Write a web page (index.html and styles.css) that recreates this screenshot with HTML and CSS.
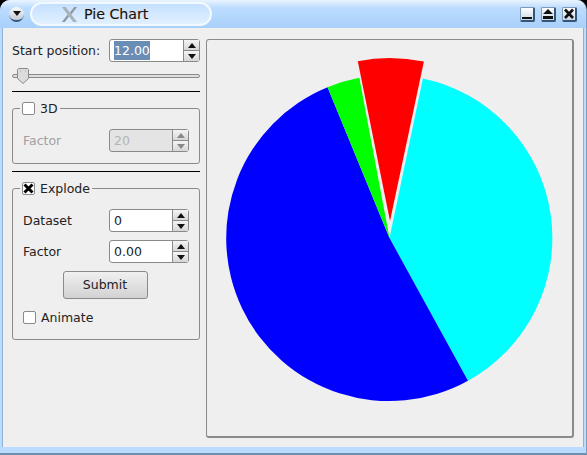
FILE: index.html
```html
<!DOCTYPE html>
<html lang="en">
<head>
    <meta charset="UTF-8">
    <title>Pie Chart</title>
    <link rel="stylesheet" href="styles.css">
</head>
<body>
    <div class="window">
        <div class="titlebar">
            <div class="menu-btn"><span class="menu-arrow"></span></div>
            <div class="title-pill">
                <svg class="x-logo" width="17" height="17" viewBox="0 0 18 18">
                    <path d="M1 1h4l12 16h-4z" fill="#a9b2ba"/>
                    <path d="M14 1h3l-6 8-1.500-2zM1 17l6-8 1.500 2-4.500 6z" fill="#8f99a3"/>
                </svg>
                <span class="title-text">Pie Chart</span>
            </div>
            <div class="win-btns">
                <div class="win-btn">
                    <svg width="12" height="12" viewBox="0 0 12 12"><path d="M1 9h10v2H1z" fill="#111"/></svg>
                </div>
                <div class="win-btn">
                    <svg width="12" height="12" viewBox="0 0 12 12"><path d="M6 1l5 5H1zM1 8h10v3H1z" fill="#111"/></svg>
                </div>
                <div class="win-btn">
                    <svg width="12" height="12" viewBox="0 0 12 12"><path d="M2 1.500l8 8.500M10 1.500l-8 8.500" stroke="#111" stroke-width="2.600" fill="none"/></svg>
                </div>
            </div>
        </div>

        <div class="content">
            <div class="controls">
                <div class="row start-row">
                    <span class="row-label">Start position:</span>
                    <div class="spin spin-wide">
                        <div class="spin-value"><span class="selected">12.00</span></div>
                        <div class="spin-btns">
                            <div class="spin-btn"><span class="arrow-up"></span></div>
                            <div class="spin-btn"><span class="arrow-down"></span></div>
                        </div>
                    </div>
                </div>

                <div class="slider">
                    <div class="slider-track"></div>
                    <svg class="slider-handle" width="12" height="16" viewBox="0 0 12 16">
                        <path d="M1.500.500h9l1 1v9l-5.500 5-5.500-5v-9z" fill="#dcdcdc" stroke="#8a8a8a"/>
                        <path d="M3 3h1M8 3h1" stroke="#aaa"/>
                    </svg>
                </div>

                <div class="divider first-divider"></div>

                <fieldset class="group group-3d">
                    <legend><span class="check"></span>3D</legend>
                    <div class="row disabled">
                        <span class="row-label">Factor</span>
                        <div class="spin">
                            <div class="spin-value">20</div>
                            <div class="spin-btns">
                                <div class="spin-btn"><span class="arrow-up"></span></div>
                                <div class="spin-btn"><span class="arrow-down"></span></div>
                            </div>
                        </div>
                    </div>
                </fieldset>

                <div class="divider second-divider"></div>

                <fieldset class="group group-explode">
                    <legend>
                        <span class="check">
                            <svg width="11" height="11" viewBox="0 0 11 11"><path d="M1.500 1.500l8 8M9.500 1.500l-8 8" stroke="#000" stroke-width="3"/></svg>
                        </span>Explode
                    </legend>
                    <div class="row">
                        <span class="row-label">Dataset</span>
                        <div class="spin">
                            <div class="spin-value">0</div>
                            <div class="spin-btns">
                                <div class="spin-btn"><span class="arrow-up"></span></div>
                                <div class="spin-btn"><span class="arrow-down"></span></div>
                            </div>
                        </div>
                    </div>
                    <div class="row">
                        <span class="row-label">Factor</span>
                        <div class="spin">
                            <div class="spin-value">0.00</div>
                            <div class="spin-btns">
                                <div class="spin-btn"><span class="arrow-up"></span></div>
                                <div class="spin-btn"><span class="arrow-down"></span></div>
                            </div>
                        </div>
                    </div>
                    <div class="submit-wrap"><button class="submit">Submit</button></div>
                    <div class="animate"><span class="check"></span>Animate</div>
                </fieldset>
            </div>

            <div class="chart-frame">
                <svg class="pie" width="365" height="396" viewBox="207 40 365 396">
                    <path d="M389.500 238L468 380.800A163 163 0 0 0 422.900 78.500Z" fill="#00ffff"/>
                    <path d="M389.500 238L327.600 87.200A163 163 0 1 0 468 380.800Z" fill="#0000ff"/>
                    <path d="M389.500 238L359.300 77.800A163 163 0 0 0 327.600 87.200Z" fill="#00ff00"/>
                    <path d="M390 221L423.900 61.600A163 163 0 0 0 357.800 61.200Z" fill="#ff0000"/>
                </svg>
            </div>
        </div>
    </div>
</body>
</html>
```

FILE: styles.css
```css
* {
    box-sizing: border-box;
}
body {
    margin: 0;
    background: #000;
    font-family: "DejaVu Sans", sans-serif;
    font-size: 12.500px;
    color: #222;
}
.window {
    width: 587px;
    height: 455px;
    display: flex;
    flex-direction: column;
    background: #bcdcff;
    border-radius: 10px 10px 0 0;
    border-bottom: 2px solid #6f8fae;
    border-right: 1px solid #7f9fc0;
    overflow: hidden;
}
.titlebar {
    height: 28px;
    flex: none;
    display: flex;
    align-items: center;
    padding: 0 9px 0 9px;
    background: linear-gradient(#eaf4ff 0, #bcdcff 8px, #a8d0fb 100%);
}
.menu-btn {
    width: 15px;
    height: 15px;
    border-radius: 50%;
    background: linear-gradient(#f8f8f8, #c4ccd6);
    border-bottom: 2px solid #33557a;
    display: flex;
    align-items: center;
    justify-content: center;
}
.menu-arrow {
    border: 4px solid transparent;
    border-top: 5px solid #111;
    border-bottom: 0;
}
.title-pill {
    width: 182px;
    height: 24px;
    margin-left: 6px;
    display: flex;
    align-items: center;
    padding-left: 29px;
    border: 2px solid #f4f9ff;
    border-radius: 12px;
    background: linear-gradient(#c4e0ff, #e2f0ff);
}
.x-logo {
    flex: none;
}
.title-text {
    margin-left: 6px;
    color: #111;
    font-size: 14.200px;
    text-shadow: 0 0 2px #fff, 0 0 2px #fff, 0 0 1px #111;
}
.win-btns {
    margin-left: auto;
    display: flex;
    gap: 6px;
}
.win-btn {
    width: 15px;
    height: 15px;
    display: flex;
    align-items: center;
    justify-content: center;
    background: linear-gradient(#fff, #c8d8ea);
    border: 1px solid #7f99b5;
    border-bottom: 2px solid #33557a;
    border-right: 2px solid #33557a;
    border-radius: 2px;
}
.content {
    flex: 1;
    min-height: 0;
    display: flex;
    gap: 6px;
    margin: 0 2px 6px 2px;
    padding: 11px 9px 8px 9px;
    background: #efefef;
    border-left: 1px solid #8fb2d6;
    border-right: 1px solid #8fb2d6;
}
.controls {
    width: 188px;
    flex: none;
    display: flex;
    flex-direction: column;
}
.row {
    display: flex;
    align-items: center;
    justify-content: space-between;
}
.spin {
    width: 80px;
    height: 23px;
    display: flex;
    background: #fff;
    border: 1px solid #8a8a8a;
    border-radius: 3px;
}
.spin-wide {
    width: 91px;
}
.spin-value {
    flex: 1;
    padding-left: 4px;
    line-height: 21px;
    font-size: 12.500px;
}
.selected {
    display: inline-block;
    background: #6a8db5;
    color: #fff;
    line-height: 19px;
}
.spin-btns {
    width: 16px;
    flex: none;
    display: flex;
    flex-direction: column;
    border-left: 1px solid #8a8a8a;
}
.spin-btn {
    flex: 1;
    display: flex;
    align-items: center;
    justify-content: center;
    background: linear-gradient(#f4f4f4, #d6d6d6);
}
.spin-btn + .spin-btn {
    border-top: 1px solid #8a8a8a;
}
.arrow-up {
    border: 4px solid transparent;
    border-bottom: 5px solid #111;
    border-top: 0;
}
.arrow-down {
    border: 4px solid transparent;
    border-top: 5px solid #111;
    border-bottom: 0;
}
.slider {
    position: relative;
    height: 16px;
    margin-top: 6px;
    display: flex;
    align-items: center;
}
.slider-track {
    width: 100%;
    height: 4px;
    background: #dedede;
    border: 1px solid #8a8a8a;
    border-radius: 2px;
}
.slider-handle {
    position: absolute;
    left: 5px;
    top: 0;
}
.divider {
    height: 1px;
    flex: none;
    background: #000;
}
.first-divider {
    margin: 7px 0 9px;
}
.second-divider {
    margin: 7px 0 9px;
}
.group {
    margin: 0;
    padding: 0 10px 0 10px;
    border: 1px solid #8a8a8a;
    border-radius: 3px;
    min-width: 0;
}
.group legend {
    margin-left: -3px;
    padding: 0 2px 0 2px;
    display: flex;
    align-items: center;
    height: 14px;
}
.group-3d {
    height: 63px;
}
.group-3d .row {
    margin-top: 14px;
}
.group-explode {
    height: 159px;
}
.group-explode .row {
    margin-top: 14px;
}
.group-explode .row + .row {
    margin-top: 8px;
}
.check {
    width: 13px;
    height: 13px;
    flex: none;
    margin-right: 5px;
    background: #fff;
    border: 1px solid #8a8a8a;
    border-radius: 2px;
    display: inline-flex;
    align-items: center;
    justify-content: center;
}
.disabled {
    color: #a0a0a0;
}
.disabled .spin {
    background: #e4e4e4;
}
.disabled .spin-value {
    color: #b4b4b4;
}
.disabled .arrow-up {
    border-bottom-color: #888;
}
.disabled .arrow-down {
    border-top-color: #888;
}
.submit-wrap {
    display: flex;
    justify-content: center;
    margin-top: 8px;
    padding-right: 2px;
}
.submit {
    width: 85px;
    height: 28px;
    padding-bottom: 2px;
    font: inherit;
    color: #222;
    background: linear-gradient(#f0f0f0, #d2d2d2);
    border: 1px solid #8a8a8a;
    border-radius: 3px;
}
.animate {
    display: flex;
    align-items: center;
    margin-top: 11px;
}
.chart-frame {
    width: 368px;
    height: 399px;
    flex: none;
    border: 1px solid #8a8a8a;
    border-right-width: 2px;
    border-bottom-width: 2px;
    border-radius: 3px;
    background: #efefef;
}
.pie {
    display: block;
}
```
